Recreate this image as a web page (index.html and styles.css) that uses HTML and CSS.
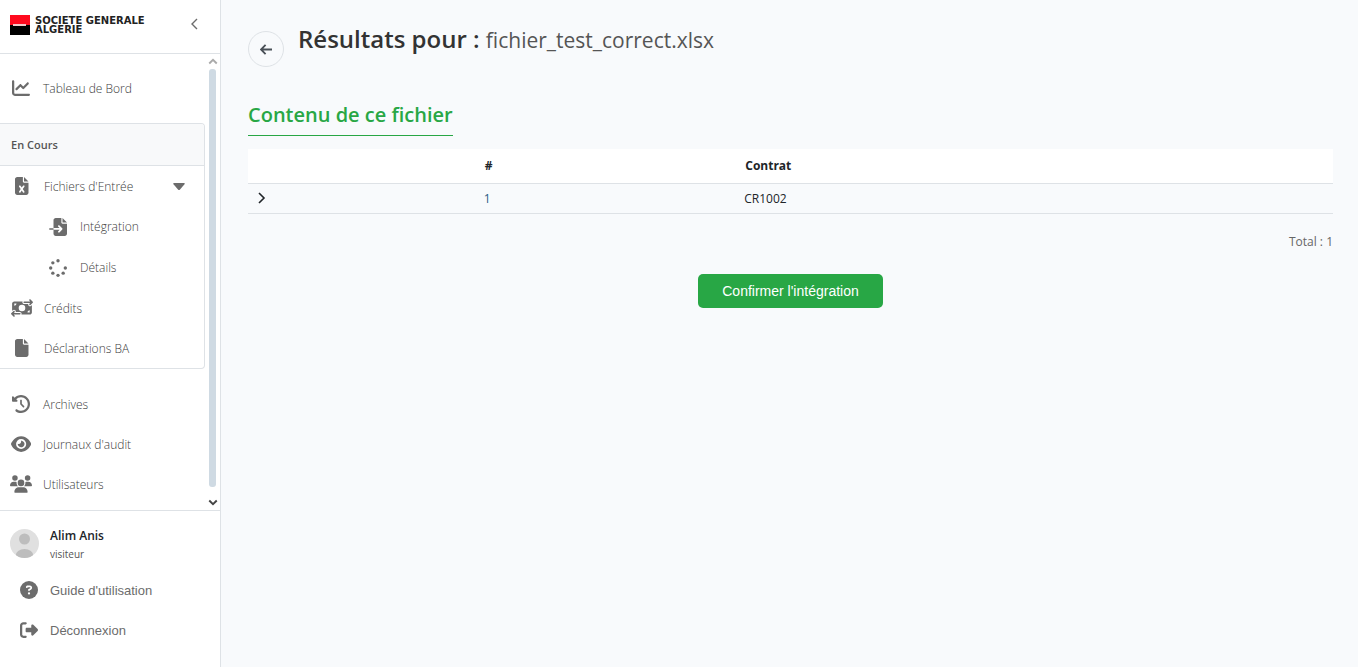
FILE: index.html
```html
<!DOCTYPE html>
<html lang="fr">
<head>
<meta charset="utf-8">
<meta name="viewport" content="width=device-width, initial-scale=1">
<title>Résultats pour : fichier_test_correct.xlsx</title>
<link rel="stylesheet" href="styles.css">
</head>
<body>
<div class="app">
  <aside class="sidebar">
    <header class="brand">
      <svg class="brand-mark" viewBox="0 0 20 20" aria-hidden="true"><path fill="#ff0a1e" d="M0 0h20v10H0z"/><path d="M0 10h20v10H0z"/><path fill="#f3c9c9" d="M3 9h13v2H3z"/></svg>
      <div class="brand-name"><div>SOCIETE GENERALE</div><div>ALGERIE</div></div>
      <button class="collapse" type="button" aria-label="Réduire le menu"><svg viewBox="0 0 8 12"><path d="M7 1 2 6l5 5"/></svg></button>
    </header>
    <div class="scroll">
      <nav class="nav">
        <a class="item" href="#"><span class="icon"><svg viewBox="0 0 512 512"><path d="M64 64c0-17.7-14.3-32-32-32S0 46.3 0 64V400c0 44.2 35.8 80 80 80H480c17.7 0 32-14.3 32-32s-14.3-32-32-32H80c-8.8 0-16-7.2-16-16V64zm406.6 86.6c12.5-12.5 12.5-32.8 0-45.3s-32.8-12.5-45.3 0L320 210.7l-57.4-57.4c-12.5-12.5-32.8-12.5-45.3 0l-112 112c-12.5 12.5-12.5 32.8 0 45.3s32.8 12.5 45.3 0L240 221.3l57.4 57.4c12.5 12.5 32.8 12.5 45.3 0l128-128z"/></svg></span>Tableau de Bord</a>
        <section class="group">
          <h2 class="group-title">En Cours</h2>
          <a class="item" href="#"><span class="icon"><svg viewBox="0 0 384 512"><path d="M0 64C0 28.7 28.7 0 64 0H224V128c0 17.7 14.3 32 32 32H384V448c0 35.3-28.7 64-64 64H64c-35.3 0-64-28.7-64-64V64zm384 64H256V0L384 128z"/><path class="cut" d="M155.7 250.2L192 302.1l36.3-51.9c7.6-10.9 22.6-13.5 33.4-5.9s13.5 22.6 5.9 33.4L221.3 344l46.4 66.2c7.6 10.9 5 25.8-5.9 33.4s-25.8 5-33.4-5.9L192 385.8l-36.3 51.9c-7.6 10.9-22.6 13.5-33.4 5.9s-13.5-22.6-5.9-33.4L162.7 344l-46.4-66.2c-7.6-10.9-5-25.8 5.9-33.4s25.8-5 33.4 5.9z"/></svg></span>Fichiers d'Entrée<svg class="caret" viewBox="0 0 12 7"><path d="M1 0h10q1.500 0 .5 1.200L7 6.500q-1 1-2 0L.5 1.200Q-.5 0 1 0z"/></svg></a>
          <a class="item sub" href="#"><span class="icon"><svg viewBox="0 0 512 512"><path d="M128 64c0-35.3 28.7-64 64-64H352V128c0 17.700 14.300 32 32 32H512V448c0 35.300-28.700 64-64 64H192c-35.300 0-64-28.700-64-64V336H302.100l-39 39c-9.400 9.400-9.400 24.600 0 33.900s24.600 9.400 33.900 0l80-80c9.400-9.400 9.400-24.600 0-33.900l-80-80c-9.400-9.400-24.600-9.400-33.900 0s-9.400 24.600 0 33.900l39 39H128V64zm0 224v48H24c-13.300 0-24-10.700-24-24s10.700-24 24-24H128zM512 128H384V0L512 128z"/></svg></span>Intégration</a>
          <a class="item sub" href="#"><span class="icon"><svg viewBox="0 0 512 512"><circle cx="256" cy="48" r="48"/><circle cx="256" cy="464" r="48"/><circle cx="48" cy="256" r="48"/><circle cx="464" cy="256" r="48"/><circle cx="109" cy="109" r="48"/><circle cx="109" cy="403" r="48"/><circle cx="403" cy="403" r="48"/></svg></span>Détails</a>
          <a class="item" href="#"><span class="icon"><svg viewBox="0 0 640 512"><path d="M535 41c-9.400-9.400-9.400-24.600 0-33.900s24.600-9.400 33.900 0l64 64c4.500 4.500 7 10.600 7 17s-2.500 12.500-7 17l-64 64c-9.400 9.400-24.600 9.400-33.900 0s-9.400-24.600 0-33.900l23-23L384 112c-13.300 0-24-10.700-24-24s10.700-24 24-24l174.100 0L535 41zM105 377l-23 23L256 400c13.300 0 24 10.700 24 24s-10.700 24-24 24L81.900 448l23 23c9.400 9.400 9.400 24.600 0 33.900s-24.600 9.400-33.900 0L7 441c-4.500-4.500-7-10.600-7-17s2.500-12.500 7-17l64-64c9.400-9.400 24.600-9.400 33.900 0s9.400 24.600 0 33.900zM96 64H337.900c-3.700 7.200-5.900 15.300-5.900 24c0 28.700 23.300 52 52 52l117.400 0c-4 17 .6 35.500 13.800 48.800c20.300 20.300 53.200 20.300 73.500 0L608 169.500V384c0 35.300-28.700 64-64 64H302.100c3.700-7.200 5.900-15.300 5.900-24c0-28.700-23.300-52-52-52l-117.400 0c4-17-.6-35.500-13.800-48.800c-20.300-20.300-53.200-20.300-73.500 0L32 342.500V128c0-35.300 28.700-64 64-64zm64 64H96v64c35.300 0 64-28.700 64-64zM544 320c-35.300 0-64 28.700-64 64h64V320zM320 352a96 96 0 1 0 0-192 96 96 0 1 0 0 192z"/></svg></span>Crédits</a>
          <a class="item" href="#"><span class="icon"><svg viewBox="0 0 384 512"><path d="M0 64C0 28.7 28.7 0 64 0H224V128c0 17.7 14.3 32 32 32H384V448c0 35.3-28.7 64-64 64H64c-35.3 0-64-28.7-64-64V64zm384 64H256V0L384 128z"/></svg></span>Déclarations BA</a>
        </section>
        <a class="item" href="#"><span class="icon"><svg viewBox="0 0 512 512"><path d="M75 75L41 41C25.900 25.900 0 36.600 0 57.900V168c0 13.300 10.700 24 24 24H134.100c21.400 0 32.100-25.900 17-41l-30.800-30.800C155 85.500 203 64 256 64c106 0 192 86 192 192s-86 192-192 192c-40.800 0-78.600-12.700-109.700-34.400c-14.500-10.100-34.400-6.600-44.600 7.900s-6.600 34.400 7.900 44.600C151.200 495 201.700 512 256 512c141.400 0 256-114.600 256-256S397.400 0 256 0C185.300 0 121.300 28.700 75 75zm181 53c-13.300 0-24 10.700-24 24V256c0 6.400 2.500 12.500 7 17l72 72c9.400 9.400 24.600 9.400 33.900 0s9.400-24.600 0-33.900l-65-65V152c0-13.300-10.700-24-24-24z"/></svg></span>Archives</a>
        <a class="item" href="#"><span class="icon"><svg viewBox="0 0 576 512"><path d="M288 32c-80.800 0-145.500 36.800-192.600 80.600C48.600 156 17.300 208 2.500 243.700c-3.300 7.900-3.300 16.700 0 24.600C17.300 304 48.600 356 95.400 399.400C142.500 443.200 207.200 480 288 480s145.500-36.800 192.600-80.600c46.800-43.500 78.100-95.400 93-131.100c3.300-7.900 3.300-16.700 0-24.600c-14.900-35.700-46.200-87.700-93-131.100C433.500 68.800 368.800 32 288 32zM144 256a144 144 0 1 1 288 0 144 144 0 1 1 -288 0zm144-64c0 35.300-28.700 64-64 64c-7.100 0-13.900-1.200-20.300-3.300c-5.500-1.800-11.900 1.600-11.700 7.400c.3 6.900 1.300 13.800 3.200 20.700c13.700 51.200 66.400 81.600 117.600 67.900s81.600-66.400 67.900-117.600c-11.100-41.500-47.800-69.400-88.600-71.100c-5.800-.2-9.200 6.100-7.400 11.700c2.100 6.400 3.300 13.200 3.300 20.300z"/></svg></span>Journaux d'audit</a>
        <a class="item" href="#"><span class="icon"><svg viewBox="0 0 640 512"><path d="M144 0a80 80 0 1 1 0 160A80 80 0 1 1 144 0zM512 0a80 80 0 1 1 0 160A80 80 0 1 1 512 0zM0 298.700C0 239.800 47.800 192 106.700 192h42.700c15.900 0 31 3.500 44.600 9.700c-1.300 7.200-1.900 14.700-1.900 22.300c0 38.200 16.800 72.500 43.300 96H21.300C9.600 320 0 310.400 0 298.700zM405.300 320h-.7c26.600-23.500 43.300-57.800 43.300-96c0-7.600-.7-15-1.900-22.300c13.600-6.300 28.700-9.700 44.600-9.700h42.700C592.200 192 640 239.800 640 298.700c0 11.800-9.600 21.300-21.300 21.300H405.300zM224 224a96 96 0 1 1 192 0 96 96 0 1 1 -192 0zM128 485.300C128 411.700 187.700 352 261.300 352H378.700C452.300 352 512 411.700 512 485.300c0 14.700-11.900 26.700-26.700 26.700H154.700c-14.700 0-26.700-11.900-26.700-26.700z"/></svg></span>Utilisateurs</a>
      </nav>
      <div class="track" aria-hidden="true">
        <svg class="arrow" viewBox="0 0 8 6"><path d="M1 5l3-3 3 3"/></svg>
        <span class="thumb"></span>
        <svg class="arrow down" viewBox="0 0 8 6"><path d="M1 1l3 3 3-3"/></svg>
      </div>
    </div>
    <footer class="account">
      <div class="user">
        <svg class="avatar" viewBox="0 0 29 29" aria-hidden="true"><defs><clipPath id="disc"><circle cx="14.500" cy="14.500" r="14.500"/></clipPath></defs><g clip-path="url(#disc)"><path fill="#e0e0e0" d="M0 0h29v29H0z"/><circle fill="#bdbdbd" cx="14.500" cy="10" r="5.500"/><ellipse fill="#bdbdbd" cx="14.500" cy="27" rx="9" ry="7"/></g></svg>
        <div class="who"><strong>Alim Anis</strong><small>visiteur</small></div>
      </div>
      <a class="item link" href="#"><span class="icon"><svg viewBox="0 0 512 512"><path d="M256 512A256 256 0 1 0 256 0a256 256 0 1 0 0 512z"/><path class="cut" d="M169.800 165.300c7.900-22.300 29.100-37.300 52.800-37.300h58.300c34.900 0 63.100 28.300 63.100 63.100c0 22.600-12.100 43.500-31.700 54.800L280 264.400c-.2 13-10.900 23.600-24 23.600c-13.300 0-24-10.700-24-24V250.500c0-8.600 4.600-16.500 12.100-20.800l44.300-25.400c4.700-2.700 7.600-7.700 7.600-13.100c0-8.400-6.800-15.100-15.100-15.100H222.600c-3.400 0-6.400 2.100-7.500 5.300l-.4 1.200c-4.400 12.500-18.200 19-30.600 14.600s-19-18.200-14.600-30.600l.4-1.200zM224 352a32 32 0 1 1 64 0 32 32 0 1 1 -64 0z"/></svg></span>Guide d'utilisation</a>
      <button class="item link" type="button"><span class="icon"><svg viewBox="0 0 512 512"><path d="M377.900 105.900L500.700 228.700c7.200 7.200 11.300 17.100 11.300 27.300s-4.100 20.100-11.300 27.300L377.900 406.100c-6.400 6.400-15 9.900-24 9.900c-18.700 0-33.900-15.200-33.900-33.900l0-62.100-128 0c-17.700 0-32-14.300-32-32l0-64c0-17.700 14.300-32 32-32l128 0 0-62.100c0-18.700 15.200-33.900 33.900-33.900c9 0 17.600 3.600 24 9.900zM160 96L96 96c-17.700 0-32 14.300-32 32l0 256c0 17.700 14.300 32 32 32l64 0c17.700 0 32 14.300 32 32s-14.300 32-32 32l-64 0c-53 0-96-43-96-96L0 128C0 75 43 32 96 32l64 0c17.700 0 32 14.300 32 32s-14.300 32-32 32z"/></svg></span>Déconnexion</button>
    </footer>
  </aside>
  <main class="main">
    <div class="heading">
      <button class="back" type="button" aria-label="Retour"><svg viewBox="0 0 14 12"><path d="M13 6H2M6 1 1 6l5 5"/></svg></button>
      <h1>Résultats pour : <span>fichier_test_correct.xlsx</span></h1>
    </div>
    <h2 class="section-title">Contenu de ce fichier</h2>
    <table class="table">
      <colgroup><col class="col-toggle"><col class="col-num"><col></colgroup>
      <thead><tr><th></th><th scope="col">#</th><th scope="col">Contrat</th></tr></thead>
      <tbody><tr><td><button class="expand" type="button" aria-label="Afficher le détail"><svg viewBox="0 0 8 12"><path d="m1 1 5 5-5 5"/></svg></button></td><td class="num">1</td><td>CR1002</td></tr></tbody>
    </table>
    <p class="total">Total : 1</p>
    <button class="confirm" type="button">Confirmer l'intégration</button>
  </main>
</div>
</body>
</html>
```
FILE: styles.css
```css
* { box-sizing: border-box; }
body { margin: 0; background: #f8fafc; color: #212529; font-family: "Open Sans", "Noto Sans", sans-serif; font-size: 12px; }
button { margin: 0; padding: 0; border: 0; background: none; font-family: inherit; cursor: pointer; }
svg { display: block; }
.app { display: flex; height: 100vh; }

.sidebar { display: flex; flex-direction: column; flex: none; width: 221px; background: #fff; border-right: 1px solid #dee2e6; }
.brand { display: flex; align-items: flex-start; flex: none; gap: 5px; height: 54px; padding: 15px 22px 0 10px; border-bottom: 1px solid #dee2e6; }
.brand-mark { width: 20px; height: 20px; }
.brand-name { padding-top: 1px; color: #222; font: 700 10px/9px "DejaVu Sans", sans-serif; white-space: nowrap; }
.collapse { margin-left: auto; padding-top: 3px; }
.collapse svg { width: 8px; height: 12px; fill: none; stroke: #6c6c6c; stroke-width: 1.4; }

.scroll { display: flex; flex: 1; min-height: 0; overflow: hidden; }
.nav { flex: 1; padding-top: 14px; }
.item { display: flex; align-items: center; gap: 11px; width: 100%; height: 40px; padding-left: 10px; color: #3c3c3c; font-weight: 300; text-decoration: none; white-space: nowrap; }
.icon { display: flex; justify-content: center; flex: none; width: 22px; }
.icon svg { height: 18px; fill: #6c6c6c; }
.icon .cut { fill: #fff; }
.group { margin: 15px 0; border: 1px solid #dee2e6; border-left: 0; border-radius: 0 4px 4px 0; overflow: hidden; }
.group .item { padding-left: 11px; }
.group-title { margin: 0; padding: 0 11px; background: #f8f9fa; border-bottom: 1px solid #dee2e6; color: #555; font-size: 11px; font-weight: 600; line-height: 41px; }
.group .sub { height: 41px; padding-left: 47px; }
.caret { width: 12px; height: 7px; margin-left: auto; margin-right: 19px; fill: #6c6c6c; }
.track { display: flex; flex-direction: column; align-items: center; width: 15px; padding: 3px 0; gap: 4px; }
.arrow { width: 10px; height: 8px; fill: none; stroke: #aaa; stroke-width: 1.5; }
.arrow.down { margin-top: 8px; stroke: #444; }
.thumb { flex: 1; width: 7px; border-radius: 3px; background: #cfdae3; }

.account { flex: none; padding: 14px 0 17px; border-top: 1px solid #dee2e6; }
.user { display: flex; align-items: center; gap: 11px; padding: 0 10px 8px; }
.avatar { width: 29px; height: 29px; }
.who { display: flex; flex-direction: column; }
.who strong { font-weight: 600; line-height: 21px; }
.who small { color: #555; font-size: 10px; line-height: 16px; }
.account .link { gap: 10px; padding-left: 18px; color: #6c6c6c; font: 13px "Liberation Sans", Arial, sans-serif; }

.main { flex: 1; min-width: 0; padding: 22px 25px 0 27px; }
.heading { display: flex; align-items: flex-start; gap: 14px; }
.back { display: flex; align-items: center; justify-content: center; flex: none; width: 36px; height: 36px; margin-top: 9px; border: 1px solid #dee2e6; border-radius: 50%; }
.back svg { width: 13px; height: 11px; fill: none; stroke: #495057; stroke-width: 2; }
h1 { margin: 0; color: #333; font-size: 24px; font-weight: 600; line-height: 34px; }
h1 span { color: #555; font-size: 21px; font-weight: 400; }
.section-title { width: fit-content; margin: 33px 0 13px; padding-bottom: 5px; border-bottom: 1px solid #28a745; color: #28a745; font-size: 20px; font-weight: 600; line-height: 30px; }
.table { width: 100%; border-collapse: collapse; table-layout: fixed; }
.col-toggle { width: 21%; }
.col-num { width: 24%; }
.table th, .table td { padding: 0 9px; border-bottom: 1px solid #dee2e6; text-align: left; }
.table th { height: 34px; background: #fff; font-weight: 700; }
.table td { height: 30px; padding-left: 8px; }
.table .num { color: #2c5c85; }
.expand { display: block; padding-left: 2px; }
.expand svg { width: 8px; height: 12px; fill: none; stroke: #212529; stroke-width: 1.6; }
.total { margin: 17px 0 22px; color: #666; line-height: 21px; text-align: right; }
.confirm { display: block; margin: 0 auto; padding: 0 24px; border-radius: 5px; background: #28a745; color: #fff; font: 14px/34px "Liberation Sans", Arial, sans-serif; }
```
